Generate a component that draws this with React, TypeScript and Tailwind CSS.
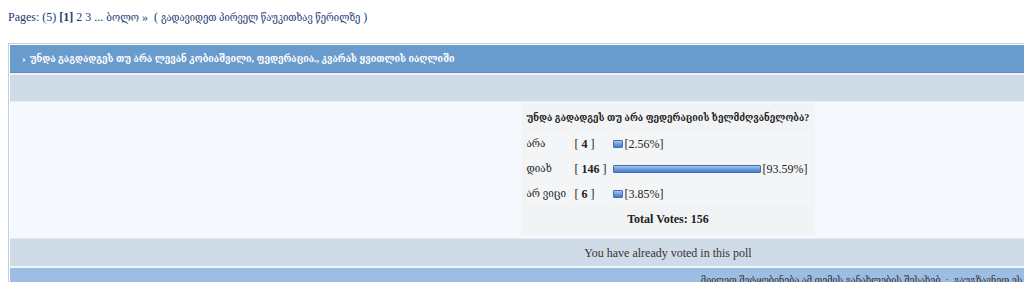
import React from "react";

const serif = { fontFamily: '"Liberation Serif", "DejaVu Serif", serif' };
const geo = { fontFamily: '"Liberation Serif", "DejaVu Serif Condensed", "DejaVu Serif", serif' };

function Bar({ w }: { w: number }) {
  return (
    <span
      className="inline-block h-[8px] rounded-[1px] border border-[#3f6fb6] bg-gradient-to-b from-[#a9c8ef] via-[#6f9ddb] to-[#4a7bc5] align-middle"
      style={{ width: w }}
    />
  );
}

const rows = [
  { label: "არა", count: "4", w: 10, pct: "[2.56%]" },
  { label: "დიახ", count: "146", w: 148, pct: "[93.59%]" },
  { label: "არ ვიცი", count: "6", w: 10, pct: "[3.85%]" },
];

export default function App() {
  return (
    <div className="w-[1024px] h-[282px] overflow-hidden bg-white text-[#222]" style={serif}>
      <div className="pl-[8px] pt-[9px] h-[43px] text-[12px] leading-[16px] text-[#1c3a75] whitespace-nowrap">
        Pages: (5) <b className="font-bold">[1]</b> 2 3 ... <span className="text-[11px]" style={geo}>ბოლო</span> » &nbsp;( <span className="text-[10.5px]" style={geo}>გადავიდეთ პირველ წაუკითხავ წერილზე</span> )
      </div>
      <div className="ml-[8px] w-[1318px] border-l border-t border-[#c3cedb] pl-[1px] pt-[1px] bg-white">
        <div className="h-[28px] bg-[#6a9bcd] border-b border-[#5e8fc2] flex items-center pl-[12px] text-white font-bold text-[11px] whitespace-nowrap">
          <span className="mr-[4px]">›</span>
          <span className="text-[10px]" style={geo}>უნდა გაგდადგეს თუ არა ლევან კობიაშვილი, ფედერაცია., კვარას ყვითლის იაღლიში</span>
        </div>
        <div className="h-[2px] bg-[#eef3f9]" />
        <div className="h-[26px] bg-[#d0dbe8]" />
        <div className="h-[1px] bg-[#e6edf5]" />
        <div className="bg-[#f5f8fc] h-[136px] flex justify-center pt-[1px]">
          <div className="w-[293px] h-[132px] bg-[#f1f3f5] px-[5px] pt-[7px]">
            <div className="font-bold text-[10px] leading-[16px] h-[22px] whitespace-nowrap" style={geo}>უნდა გადადგეს თუ არა ფედერაციის ხელმძღვანელობა?</div>
            <div className="flex flex-col gap-[2px]">
              {rows.map((r) => (
                <div key={r.label} className="flex h-[23px] items-center text-[12px]">
                  <div className="w-[45px] h-full flex items-center bg-[#f3f5f7] text-[11px] whitespace-nowrap" style={geo}>{r.label}</div>
                  <div className="w-[36px] ml-[2px] h-full flex items-center bg-[#f3f5f7] pl-[1px]">
                    [ <b className="mx-[3px]">{r.count}</b> ]
                  </div>
                  <div className="flex-1 ml-[2px] h-full flex items-center bg-[#f3f5f7] pl-[1px] gap-[2px]">
                    <Bar w={r.w} />
                    <span>{r.pct}</span>
                  </div>
                </div>
              ))}
            </div>
            <div className="text-center font-bold text-[12px] h-[24px] flex items-center justify-center mt-[2px]">Total Votes: 156</div>
          </div>
        </div>
        <div className="h-[1px] bg-[#e2e9f1]" />
        <div className="h-[27px] bg-[#d0dbe8] flex items-center justify-center text-[12px] text-[#333]">
          You have already voted in this poll
        </div>
        <div className="h-[2px] bg-[#f2f5f9]" />
        <div className="h-[20px] bg-[#9ebde3] flex items-start justify-end pr-[125px] pt-[5px] text-[10px] leading-[14px] text-[#333] whitespace-nowrap" style={geo}>
          მიიღეთ შეტყობინება ამ თემის განახლების შესახებ &nbsp;·&nbsp; გაუგზავნეთ ეს თემა მეგობარს &nbsp;·&nbsp; ამობეჭდეთ ეს თემა
        </div>
      </div>
    </div>
  );
}
